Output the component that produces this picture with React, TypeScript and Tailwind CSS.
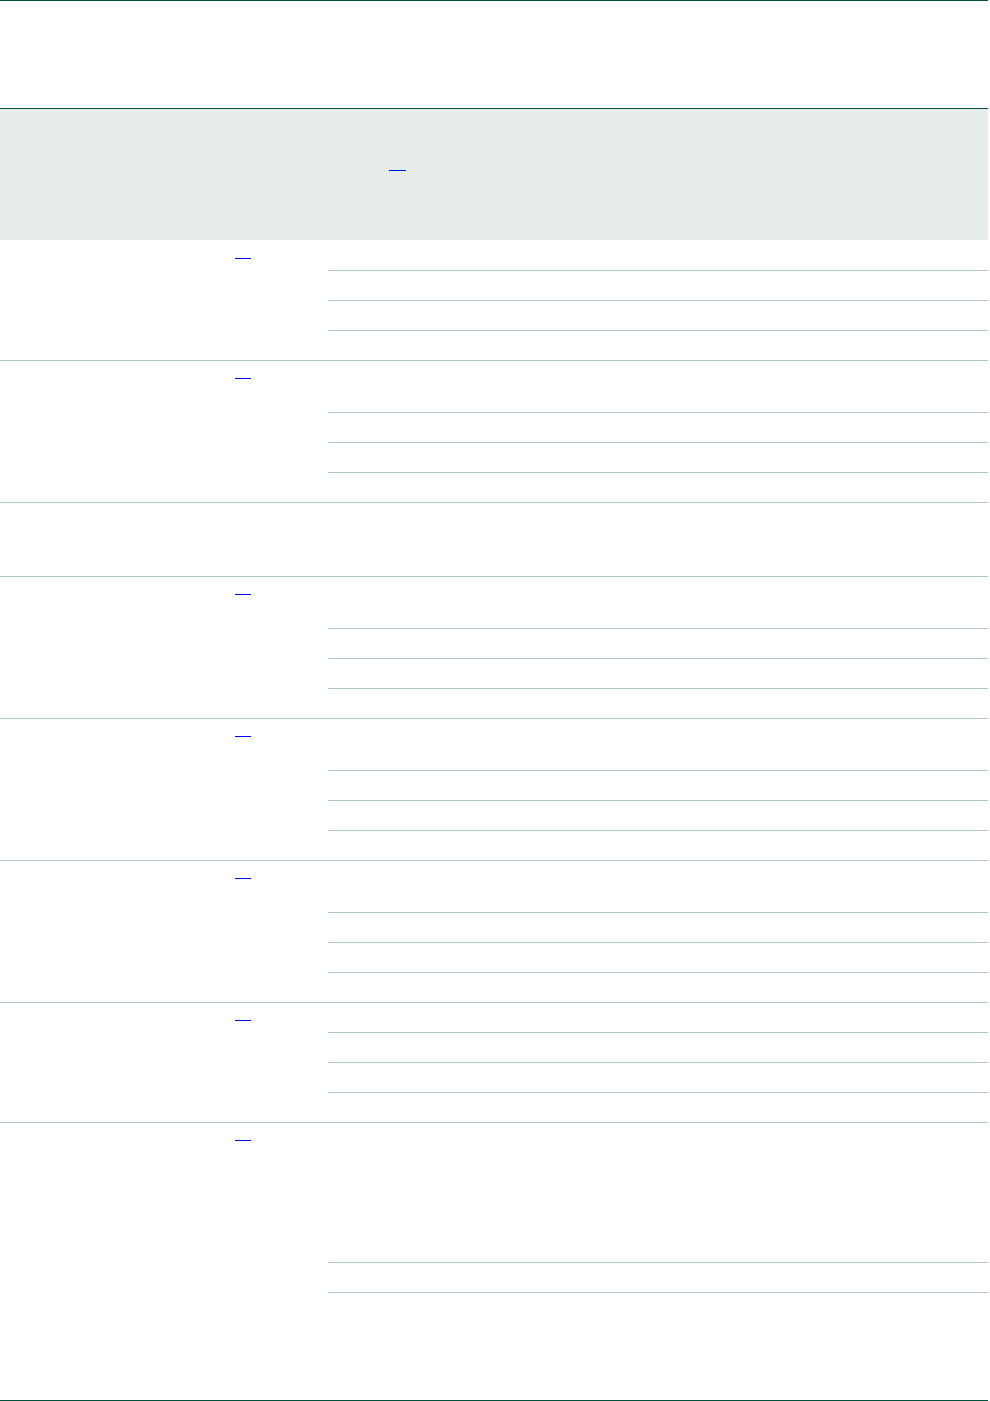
type Row = { link: boolean; subs: number[] }

// heights in px of each sub-row in the right column (first one includes the row's top border)
const rows: Row[] = [
  { link: true, subs: [30, 30, 30, 30] },
  { link: true, subs: [52, 30, 30, 30] },
  { link: false, subs: [74] },
  { link: true, subs: [52, 30, 30, 30] },
  { link: true, subs: [52, 30, 30, 30] },
  { link: true, subs: [52, 30, 30, 30] },
  { link: true, subs: [30, 30, 30, 30] },
  { link: true, subs: [140, 30, 108] },
]

function RefLink({ w }: { w: number }) {
  return (
    <a
      href="#"
      aria-label="reference"
      className="block h-0 border-b border-[#0000ff]"
      style={{ width: w }}
    />
  )
}

export default function App() {
  return (
    <div className="min-h-[1401px] bg-white font-['Liberation_Sans',Arial,sans-serif] text-xs">
      <div className="w-[988px]">
        <div className="h-px bg-[#00503c]" />
        <div className="h-[107px]" />
        <div className="h-px bg-[#00503c]" />

        {/* header */}
        <div className="flex h-[131px] bg-[#e6ecec]">
          <div className="w-[220px]" />
          <div className="w-[108px]" />
          <div className="flex-1 pl-[61px] pt-[61px]">
            <RefLink w={17} />
          </div>
        </div>

        {rows.map((row, i) => (
          <div
            key={i}
            className={i === 0 ? 'flex' : 'flex border-t border-[#abc6be]'}
          >
            <div className="w-[220px]" />
            <div className={i === 0 ? 'w-[108px] pl-[15px] pt-[18px]' : 'w-[108px] pl-[15px] pt-[17px]'}>
              {row.link ? <RefLink w={16} /> : null}
            </div>
            <div className="flex-1">
              {row.subs.map((h, j) => (
                <div
                  key={j}
                  className={j === 0 ? '' : 'border-t border-[#abc6be]'}
                  style={{ height: j === 0 && i > 0 ? h - 1 : h }}
                />
              ))}
            </div>
          </div>
        ))}

        <div className="h-px bg-[#00503c]" />
      </div>
    </div>
  )
}
